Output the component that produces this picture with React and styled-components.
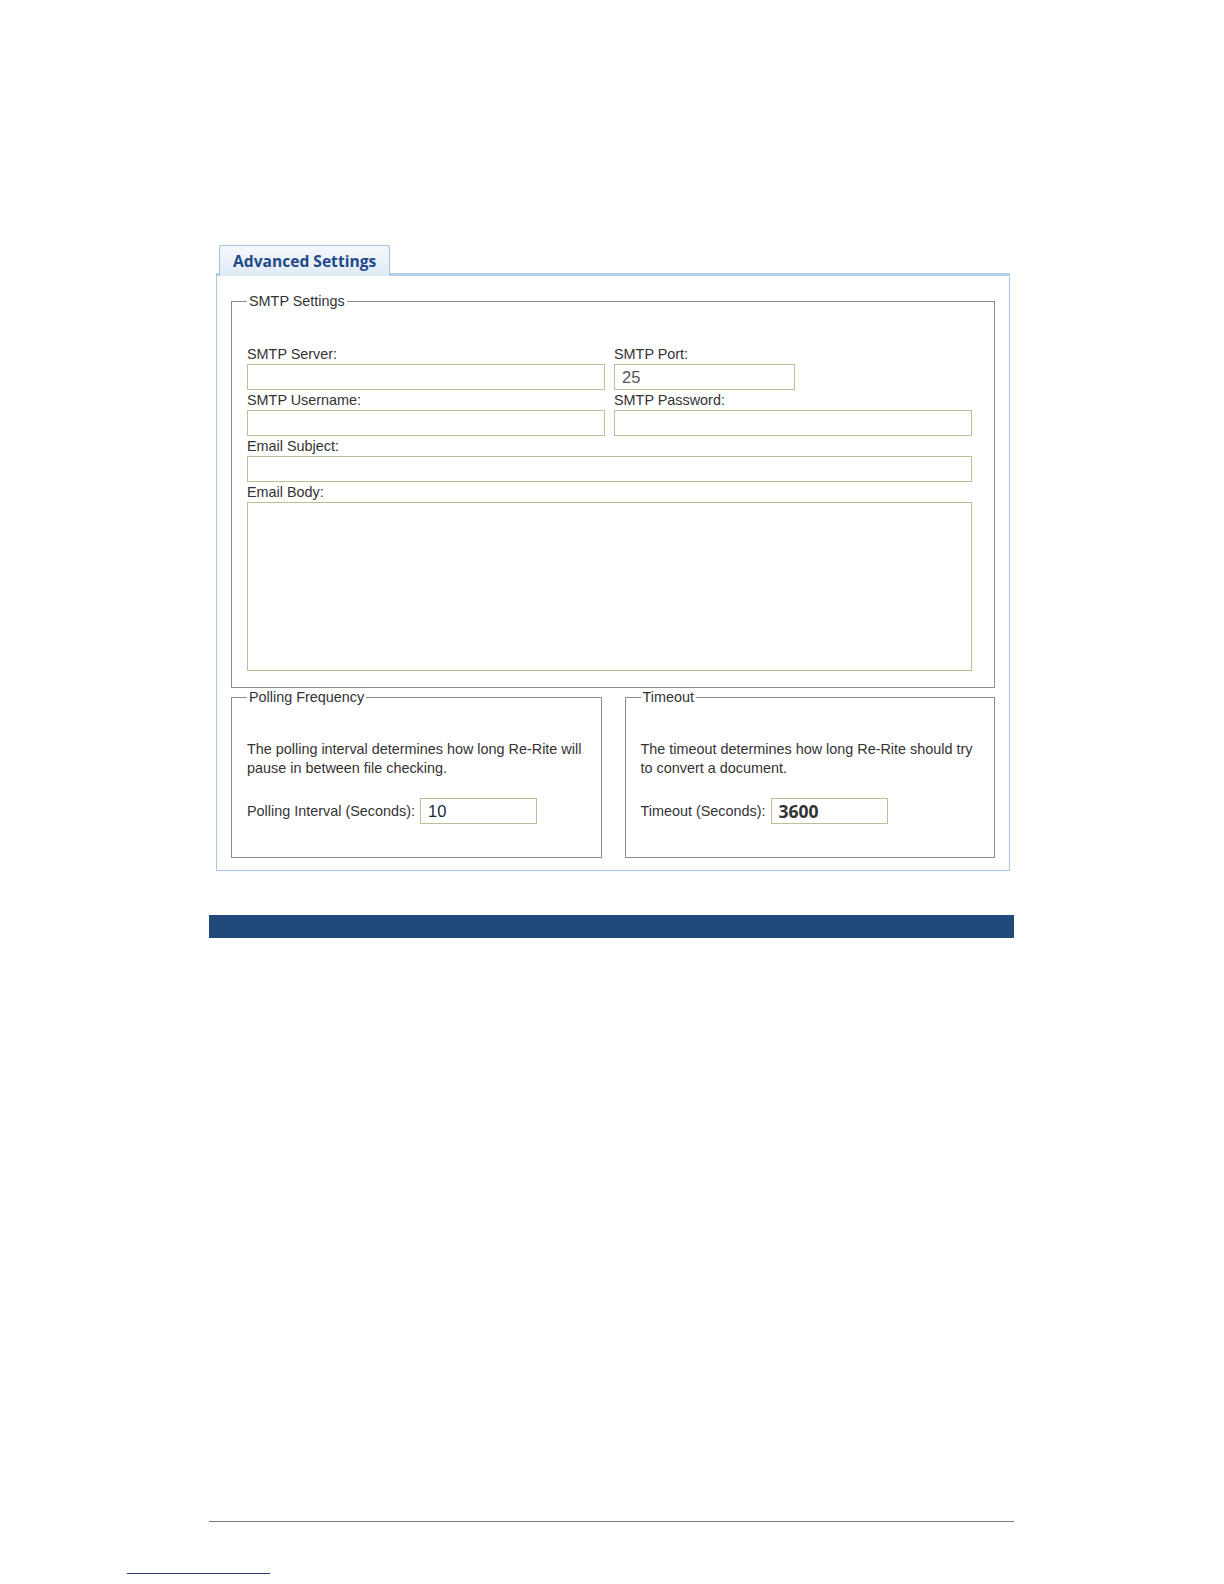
import React from 'react';
import styled, { createGlobalStyle } from 'styled-components';

const GlobalStyle = createGlobalStyle`
  html, body {
    margin: 0;
    padding: 0;
    background: #ffffff;
  }
  body {
    font-family: "Liberation Sans", Arial, sans-serif;
    color: #333333;
  }
  * {
    box-sizing: border-box;
  }
`;

const Page = styled.div`
  width: 1224px;
  min-height: 1584px;
  padding-top: 245px;
  overflow: hidden;
`;

const Window = styled.div`
  margin-left: 216px;
  width: 794px;
`;

const TabRow = styled.div`
  display: flex;
  padding-left: 3px;
`;

const Tab = styled.div`
  position: relative;
  z-index: 1;
  width: 171px;
  height: 31px;
  margin-bottom: -3px;
  padding-left: 13px;
  display: flex;
  align-items: center;
  border: 1px solid #a3c1e3;
  border-bottom: none;
  border-radius: 3px 3px 0 0;
  background: linear-gradient(#f6f9fd, #dfeaf6);
  font-family: "Open Sans", "Liberation Sans", sans-serif;
  font-weight: 700;
  font-size: 15.6px;
  color: #1f4a87;
`;

const Panel = styled.div`
  border: 1px solid #a9c6e6;
  border-top: 3px solid #b3cdea;
  background: #ffffff;
  padding: 16px 14px 12px 14px;
`;

const Group = styled.fieldset`
  margin: 0;
  min-width: 0;
  border: 1px solid #8c8c8c;
  padding: ${p => p.$pad};

  legend {
    padding: 0 2px;
    font-size: 14.4px;
    line-height: 18px;
    color: #333333;
  }
`;

const FieldGrid = styled.div`
  display: grid;
  grid-template-columns: 1fr 1fr;
  column-gap: 9px;
  row-gap: 1px;
`;

const Field = styled.div`
  display: flex;
  flex-direction: column;
  gap: 1px;
  grid-column: ${p => (p.$wide ? '1 / -1' : 'auto')};
`;

const Label = styled.label`
  font-size: 14.4px;
  line-height: 18px;
  color: #333333;
  white-space: nowrap;
`;

const TextBox = styled.input`
  display: block;
  width: ${p => p.$w || '100%'};
  height: 26px;
  margin: 0;
  padding: 0 7px;
  border: 1px solid #b9c196;
  border-radius: 0;
  background: #ffffff;
  outline: none;
  font-family: ${p => (p.$bold ? '"Open Sans", "Liberation Sans", sans-serif' : '"Liberation Sans", Arial, sans-serif')};
  font-size: ${p => (p.$bold ? '17.5px' : '16.5px')};
  font-weight: ${p => (p.$bold ? 700 : 400)};
  color: ${p => p.$color || '#333333'};
`;

const BodyBox = styled.textarea`
  display: block;
  width: 100%;
  height: 169px;
  margin: 0;
  border: 1px solid #b9c196;
  background: #ffffff;
  resize: none;
  outline: none;
`;

const BottomRow = styled.div`
  display: grid;
  grid-template-columns: 1fr 1fr;
  column-gap: 23px;
`;

const Note = styled.p`
  margin: 0;
  font-size: 14.4px;
  line-height: 19px;
  color: #333333;
  white-space: nowrap;
`;

const InlineField = styled.div`
  display: flex;
  align-items: center;
  gap: 5px;
  margin-top: 20px;
`;

const Bar = styled.div`
  margin: 44px 0 0 209px;
  width: 805px;
  height: 23px;
  background: #22497b;
`;

const Rule = styled.div`
  margin: ${p => p.$m};
  width: ${p => p.$w};
  height: 1px;
  background: ${p => p.$c};
`;

export default function App() {
  return (
    <Page>
      <GlobalStyle />
      <Window>
        <TabRow>
          <Tab>Advanced Settings</Tab>
        </TabRow>
        <Panel>
          <Group $pad="35px 22px 16px 15px">
            <legend>SMTP Settings</legend>
            <FieldGrid>
              <Field>
                <Label>SMTP Server:</Label>
                <TextBox readOnly defaultValue="" />
              </Field>
              <Field>
                <Label>SMTP Port:</Label>
                <TextBox readOnly defaultValue="25" $w="181px" $color="#555555" />
              </Field>
              <Field>
                <Label>SMTP Username:</Label>
                <TextBox readOnly defaultValue="" />
              </Field>
              <Field>
                <Label>SMTP Password:</Label>
                <TextBox readOnly type="password" defaultValue="" />
              </Field>
              <Field $wide>
                <Label>Email Subject:</Label>
                <TextBox readOnly defaultValue="" />
              </Field>
              <Field $wide>
                <Label>Email Body:</Label>
                <BodyBox readOnly defaultValue="" />
              </Field>
            </FieldGrid>
          </Group>
          <BottomRow>
            <Group $pad="34px 10px 33px 15px">
              <legend>Polling Frequency</legend>
              <Note>
                The polling interval determines how long Re-Rite will
                <br />
                pause in between file checking.
              </Note>
              <InlineField>
                <Label>Polling Interval (Seconds):</Label>
                <TextBox readOnly defaultValue="10" $w="117px" $color="#1c2a44" />
              </InlineField>
            </Group>
            <Group $pad="34px 10px 33px 15px">
              <legend>Timeout</legend>
              <Note>
                The timeout determines how long Re-Rite should try
                <br />
                to convert a document.
              </Note>
              <InlineField>
                <Label>Timeout (Seconds):</Label>
                <TextBox readOnly defaultValue="3600" $w="117px" $bold $color="#333333" />
              </InlineField>
            </Group>
          </BottomRow>
        </Panel>
      </Window>
      <Bar />
      <Rule $m="583px 0 0 209px" $w="805px" $c="#7a7a7a" />
      <Rule $m="51px 0 0 127px" $w="143px" $c="#2a3f7a" />
    </Page>
  );
}
